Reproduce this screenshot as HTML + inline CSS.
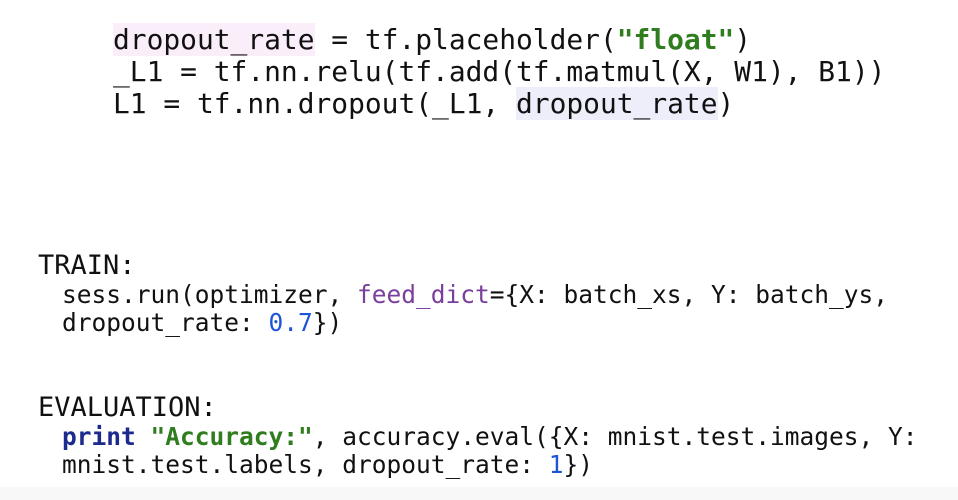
<!DOCTYPE html>
<html><head><meta charset="utf-8"><style>
body{margin:0;width:958px;height:500px;background:#fff;overflow:hidden;position:relative;font-family:"DejaVu Sans Mono","Liberation Mono",monospace;color:#111}
.l{position:absolute;white-space:pre;line-height:1}
.a{font-size:27.9px;left:113px}
.b{font-size:24.5px;left:62px}
.h{font-size:27px;left:38px}
.g{color:#2f7d1f;font-weight:bold}
.p{color:#7a3e9d}
.n{color:#1d55d6}
.k{color:#1b2a8c;font-weight:bold}
.hp{background:#fbeefb}
.hl{background:#eeeefa}
</style></head><body>
<div class="l a" style="top:26px"><span class="hp">dropout_rate</span> = tf.placeholder(<span class="g">"float"</span>)</div>
<div class="l a" style="top:58px">_L1 = tf.nn.relu(tf.add(tf.matmul(X, W1), B1))</div>
<div class="l a" style="top:90px">L1 = tf.nn.dropout(_L1, <span class="hl">dropout_rate</span>)</div>
<div class="l h" style="top:252px">TRAIN:</div>
<div class="l b" style="top:283px">sess.run(optimizer, <span class="p">feed_dict</span>={X: batch_xs, Y: batch_ys,</div>
<div class="l b" style="top:311px">dropout_rate: <span class="n">0.7</span>})</div>
<div class="l h" style="top:394px">EVALUATION:</div>
<div class="l b" style="top:425px"><span class="k">print</span> <span class="g">"Accuracy:"</span>, accuracy.eval({X: mnist.test.images, Y:</div>
<div class="l b" style="top:453px">mnist.test.labels, dropout_rate: <span class="n">1</span>})</div>
<div style="position:absolute;left:0;top:487px;width:958px;height:13px;background:#f8f8f8"></div>
</body></html>
